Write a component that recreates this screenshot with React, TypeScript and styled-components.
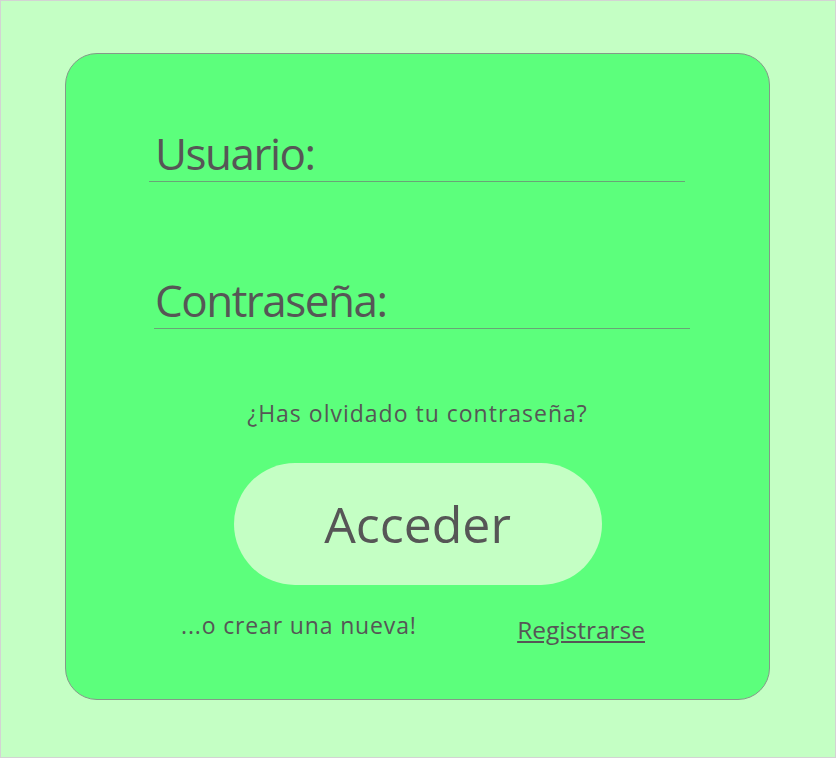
import React from "react";
import styled, { createGlobalStyle } from "styled-components";

const GlobalStyle = createGlobalStyle`
  html, body {
    margin: 0;
    padding: 0;
  }
  body {
    font-family: "Open Sans", "Noto Sans", sans-serif;
    color: #565656;
  }
`;

export default function App() {
  return (
    <>
      <GlobalStyle />
      <Page>
        <Card>
          <Field>Usuario:</Field>
          <Field $shift={5} $indent={1} $gap={91}>
            Contraseña:
          </Field>
          <Forgot>¿Has olvidado tu contraseña?</Forgot>
          <LoginButton type="button">Acceder</LoginButton>
          <Footer>
            <Hint>...o crear una nueva!</Hint>
            <RegisterLink href="#">Registrarse</RegisterLink>
          </Footer>
        </Card>
      </Page>
    </>
  );
}

const Page = styled.div`
  box-sizing: border-box;
  height: 758px;
  border: 1px solid #d3d3d3;
  background: #c4ffc4;
  padding-top: 52px;
`;

const Card = styled.div`
  box-sizing: border-box;
  width: 705px;
  height: 647px;
  margin-left: 64px;
  padding-top: 72px;
  background: #5cff7c;
  border: 1px solid #849a88;
  border-radius: 32px;
  display: flex;
  flex-direction: column;
`;

const Field = styled.div<{ $shift?: number; $gap?: number; $indent?: number }>`
  width: 536px;
  margin-left: ${(p) => 83 + (p.$shift ?? 0)}px;
  margin-top: ${(p) => p.$gap ?? 0}px;
  padding-left: ${(p) => p.$indent ?? 6}px;
  box-sizing: border-box;
  font-size: 44px;
  letter-spacing: -1.5px;
  line-height: 55px;
  border-bottom: 1px solid #69a477;
`;

const Forgot = styled.p`
  margin: 71px 0 0;
  text-align: center;
  font-size: 23px;
  letter-spacing: 1px;
  line-height: 27px;
`;

const LoginButton = styled.button`
  align-self: center;
  margin-top: 36px;
  width: 368px;
  height: 122px;
  border: none;
  border-radius: 61px;
  background: #c4ffc4;
  color: #565656;
  font-family: inherit;
  font-size: 50px;
  cursor: pointer;
`;

const Footer = styled.div`
  margin-top: 27px;
  padding: 0 124px 0 115px;
  display: flex;
  justify-content: space-between;
  align-items: flex-start;
`;

const Hint = styled.span`
  font-size: 23px;
  letter-spacing: 0.85px;
  line-height: 27px;
`;

const RegisterLink = styled.a`
  margin-top: 3px;
  font-size: 24.5px;
  line-height: 30px;
  color: #565656;
  text-decoration: underline;
`;
